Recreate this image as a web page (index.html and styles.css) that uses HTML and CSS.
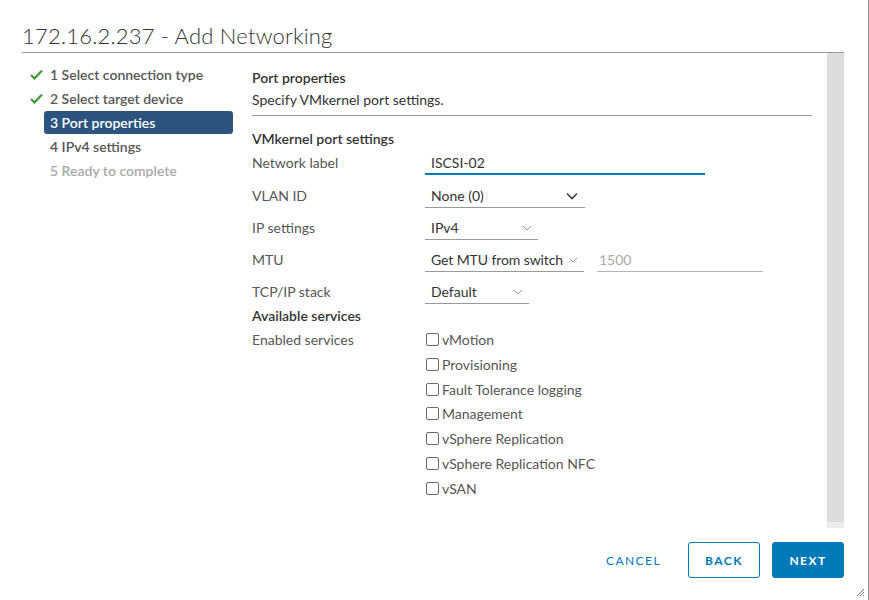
FILE: index.html
```html
<!DOCTYPE html>
<html>
<head>
<meta charset="utf-8">
<link rel="stylesheet" href="styles.css">
</head>
<body>
<div class="dialog">
  <h1 class="title">172.16.2.237 - Add Networking</h1>
  <div class="main">
    <nav class="steps">
      <div class="step"><span class="check"><svg width="13" height="11" viewBox="0 0 13 11"><path d="M1 6 L4.5 9.5 L12 1.5" fill="none" stroke="#3c9a2f" stroke-width="2.2"/></svg></span><span class="step-label">1 Select connection type</span></div>
      <div class="step"><span class="check"><svg width="13" height="11" viewBox="0 0 13 11"><path d="M1 6 L4.5 9.5 L12 1.5" fill="none" stroke="#3c9a2f" stroke-width="2.2"/></svg></span><span class="step-label">2 Select target device</span></div>
      <div class="step"><span class="check"></span><span class="step-label active">3 Port properties</span></div>
      <div class="step"><span class="check"></span><span class="step-label">4 IPv4 settings</span></div>
      <div class="step"><span class="check"></span><span class="step-label disabled">5 Ready to complete</span></div>
    </nav>
    <section class="content">
      <div class="head">Port properties</div>
      <div class="desc">Specify VMkernel port settings.</div>
      <div class="sep"></div>
      <div class="subhead">VMkernel port settings</div>
      <div class="row r33">
        <div class="label">Network label</div>
        <div class="field input focus w280">ISCSI-02</div>
      </div>
      <div class="row">
        <div class="label">VLAN ID</div>
        <div class="field select w160">None (0)<svg class="caret big" width="12" height="8" viewBox="0 0 12 8"><path d="M1 1.5 L6 6.5 L11 1.5" fill="none" stroke="#444" stroke-width="1.6"/></svg></div>
      </div>
      <div class="row">
        <div class="label">IP settings</div>
        <div class="field select w113">IPv4<svg class="caret" width="10" height="6" viewBox="0 0 10 6"><path d="M1 1 L5 5 L9 1" fill="none" stroke="#999" stroke-width="1"/></svg></div>
      </div>
      <div class="row">
        <div class="label">MTU</div>
        <div class="field select w159 tight">Get MTU from switch<svg class="caret" width="10" height="6" viewBox="0 0 10 6"><path d="M1 1 L5 5 L9 1" fill="none" stroke="#999" stroke-width="1"/></svg></div>
        <div class="field input placeholder w166">1500</div>
      </div>
      <div class="row r25">
        <div class="label">TCP/IP stack</div>
        <div class="field select w104">Default<svg class="caret" width="10" height="6" viewBox="0 0 10 6"><path d="M1 1 L5 5 L9 1" fill="none" stroke="#999" stroke-width="1"/></svg></div>
      </div>
      <div class="subhead2">Available services</div>
      <div class="services">
        <div class="label">Enabled services</div>
        <div class="checks">
          <label class="cb"><span class="box"></span>vMotion</label>
          <label class="cb"><span class="box"></span>Provisioning</label>
          <label class="cb"><span class="box"></span>Fault Tolerance logging</label>
          <label class="cb"><span class="box"></span>Management</label>
          <label class="cb"><span class="box"></span>vSphere Replication</label>
          <label class="cb"><span class="box"></span>vSphere Replication NFC</label>
          <label class="cb"><span class="box"></span>vSAN</label>
        </div>
      </div>
    </section>
    <div class="scrollbar"><div class="track"></div><div class="end"></div></div>
  </div>
  <footer class="footer">
    <button class="btn link">Cancel</button>
    <button class="btn outline">Back</button>
    <button class="btn primary">Next</button>
  </footer>
  <svg class="grip" width="9" height="9" viewBox="0 0 9 9"><path d="M8 1 L1 8 M8 4 L4 8 M8 7 L7 8" stroke="#777" stroke-width="1"/></svg>
</div>
</body>
</html>
```
FILE: styles.css
```css
* { box-sizing: border-box; }
html, body { margin: 0; padding: 0; background: #fff; }
body { font-family: Lato, "Noto Sans", sans-serif; color: #565656; }
.dialog {
  position: relative;
  width: 869px;
  height: 600px;
  border-right: 1px solid #8c8c8c;
  padding: 0 24px 0 22px;
}
.title {
  margin: 0;
  padding-top: 22px;
  height: 53px;
  font-size: 22px;
  line-height: 28px;
  font-weight: 300;
  color: #333;
  border-bottom: 1px solid #9a9a9a;
  letter-spacing: 0.2px;
}
.main {
  display: flex;
  height: 475px;
}
.steps {
  width: 230px;
  flex: none;
  padding: 9px 0 0 8px;
}
.step {
  display: flex;
  align-items: center;
  height: 24px;
}
.check {
  width: 14px;
  flex: none;
  display: flex;
  align-items: center;
}
.step-label {
  width: 189px;
  height: 23px;
  line-height: 23px;
  padding: 0 6px;
  font-size: 14px;
  font-weight: 600;
  color: #565656;
  border-radius: 3px;
}
.step-label.active { background: #2b557f; color: #fff; }
.step-label.disabled { color: #a9a9a9; }
.content {
  flex: 1;
  padding: 14px 15px 0 0;
  font-size: 14px;
  overflow: hidden;
}
.head { line-height: 22px; font-weight: 600; color: #333; }
.desc { line-height: 22px; color: #333; }
.sep { height: 1px; background: #9a9a9a; margin-top: 4px; }
.subhead { margin-top: 12px; line-height: 22px; font-weight: 600; color: #333; }
.subhead2 { line-height: 22px; font-weight: 600; color: #333; }
.row { display: flex; height: 32px; margin-top: 0; }
.row.r33 { height: 33px; margin-top: 1px; }
.row.r25 { height: 25px; }
.label { width: 173px; flex: none; line-height: 24px; color: #565656; }
.field {
  position: relative;
  height: 24px;
  line-height: 23px;
  border-bottom: 1px solid #9a9a9a;
  padding-left: 6px;
  color: #333;
}
.field.tight { letter-spacing: -0.1px; }
.field.focus { border-bottom: 2px solid #0079b8; }
.field.placeholder { color: #aaa; margin-left: 13px; padding-left: 2px; border-bottom-color: #b3b3b3; }
.caret { position: absolute; right: 6px; top: 9px; }
.caret.big { right: 7px; top: 8px; }
.w280 { width: 280px; }
.w160 { width: 160px; }
.w113 { width: 113px; }
.w159 { width: 159px; }
.w166 { width: 166px; }
.w104 { width: 104px; }
.services { display: flex; margin-top: 0; }
.services .label { line-height: 25px; }
.checks { display: flex; flex-direction: column; }
.cb { display: flex; align-items: center; height: 24.85px; color: #565656; padding-left: 1px; }
.box {
  width: 13px; height: 13px;
  border: 1px solid #6a6a6a;
  border-radius: 2px;
  margin-right: 3px;
}
.scrollbar {
  width: 17px;
  flex: none;
  display: flex;
  flex-direction: column;
}
.track { flex: 1; background: #dcdcdc; }
.end { height: 6px; background: #ececec; }
.footer {
  display: flex;
  justify-content: flex-end;
  align-items: center;
  margin-top: 14px;
  gap: 12px;
}
.btn {
  height: 36px;
  min-width: 72px;
  padding: 0 12px;
  font-family: Lato, "Noto Sans", sans-serif;
  font-size: 12px;
  font-weight: 700;
  letter-spacing: 0.12em;
  text-transform: uppercase;
  border-radius: 3px;
  border: 1px solid #0079b8;
  background: #fff;
  color: #0079b8;
}
.btn.link { border-color: transparent; font-weight: 400; margin-right: 2px; }
.btn.primary { background: #0079b8; color: #fff; }
.grip { position: absolute; right: 3px; bottom: 3px; }
```
